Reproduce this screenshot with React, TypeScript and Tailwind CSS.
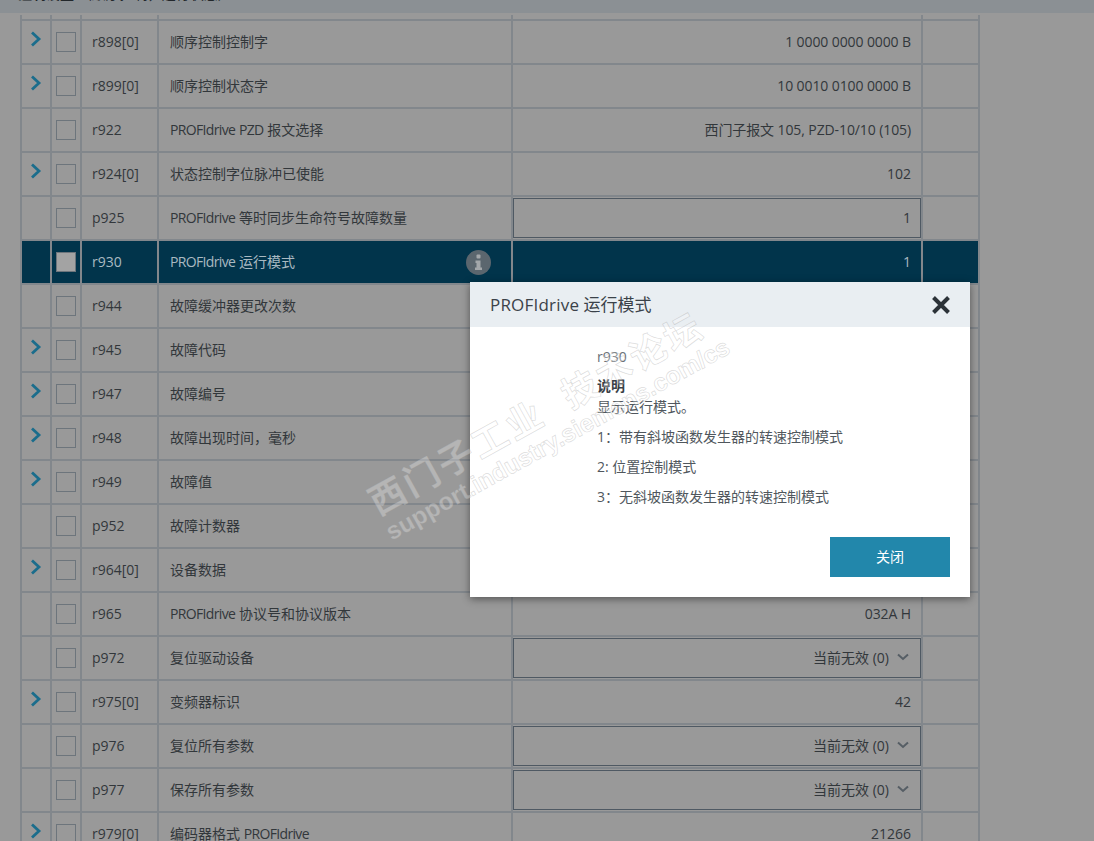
const ROWS = [
  { id: 'r898[0]', name: '顺序控制控制字', value: '1 0000 0000 0000 B', expand: true },
  { id: 'r899[0]', name: '顺序控制状态字', value: '10 0010 0100 0000 B', expand: true },
  { id: 'r922', name: 'PROFIdrive PZD 报文选择', value: '西门子报文 105, PZD-10/10 (105)' },
  { id: 'r924[0]', name: '状态控制字位脉冲已使能', value: '102', expand: true },
  { id: 'p925', name: 'PROFIdrive 等时同步生命符号故障数量', value: '1', kind: 'input' },
  { id: 'r930', name: 'PROFIdrive 运行模式', value: '1', selected: true },
  { id: 'r944', name: '故障缓冲器更改次数', value: '' },
  { id: 'r945', name: '故障代码', value: '', expand: true },
  { id: 'r947', name: '故障编号', value: '', expand: true },
  { id: 'r948', name: '故障出现时间，毫秒', value: '', expand: true },
  { id: 'r949', name: '故障值', value: '', expand: true },
  { id: 'p952', name: '故障计数器', value: '' },
  { id: 'r964[0]', name: '设备数据', value: '', expand: true },
  { id: 'r965', name: 'PROFIdrive 协议号和协议版本', value: '032A H' },
  { id: 'p972', name: '复位驱动设备', value: '当前无效 (0)', kind: 'select' },
  { id: 'r975[0]', name: '变频器标识', value: '42', expand: true },
  { id: 'p976', name: '复位所有参数', value: '当前无效 (0)', kind: 'select' },
  { id: 'p977', name: '保存所有参数', value: '当前无效 (0)', kind: 'select' },
  { id: 'r979[0]', name: '编码器格式 PROFIdrive', value: '21266', expand: true },
];

function Chevron() {
  return (
    <svg width="12" height="16" viewBox="0 0 12 16" className="mt-[10px] ml-[8px]">
      <path d="M2 1.5 L9 8 L2 14.5" fill="none" stroke="#1b6d8c" strokeWidth="2.8" />
    </svg>
  );
}

function InfoIcon() {
  return (
    <svg width="25" height="25" viewBox="0 0 25 25">
      <circle cx="12.5" cy="12.5" r="12.5" fill="#5b666e" />
      <rect x="10.5" y="4.5" width="4" height="4" rx="1" fill="#a3a7aa" />
      <path d="M9.5 10.5h5v7h1.5v2.5h-7v-2.5h1.5v-4.5h-1z" fill="#a3a7aa" />
    </svg>
  );
}

// the latin words run a bit narrower than Open Sans in the reference
function Name({ text }: { text: string }) {
  return (
    <span>
      {text.split(/(PROFIdrive|PZD)/).map((part, i) =>
        i % 2 === 1 ? (
          <span key={i} className="tracking-[-0.65px]">
            {part}
          </span>
        ) : (
          part
        ),
      )}
    </span>
  );
}

function Row({ row }: { row: (typeof ROWS)[number] }) {
  const bg = row.selected ? 'bg-[#01344b]' : 'bg-[#999999]';
  const text = row.selected ? 'text-[#a9b9c1]' : 'text-[#32373b]';
  return (
    <>
      <div className={bg}>{row.expand && <Chevron />}</div>
      <div className={`${bg} flex items-center justify-center`}>
        <div className={`w-5 h-5 border border-[#6d757c] ${row.selected ? 'bg-[#a3a3a3]' : ''}`} />
      </div>
      <div className={`${bg} ${text} flex items-center pl-[10px] pb-[2px]`}>{row.id}</div>
      <div className={`${bg} ${text} flex items-center justify-between pl-[11px] pr-[20px]`}>
        <span className="pb-[2px]">
          <Name text={row.name} />
        </span>
        {row.selected && <InfoIcon />}
      </div>
      <div className={`${bg} ${text} flex items-center`}>
        {row.kind === 'input' || row.kind === 'select' ? (
          <div className="w-full h-10 border border-[#4f5963] flex items-center justify-end pr-[9px]">
            <span className={row.kind === 'select' ? 'mr-[8px] pb-[2px]' : 'pb-[2px]'}>{row.value}</span>
            {row.kind === 'select' && (
              <svg width="12" height="8" viewBox="0 0 12 8" className="mb-[2px] mr-[2px]">
                <path d="M1 1.5 L6 6 L11 1.5" fill="none" stroke="#565e65" strokeWidth="2" />
              </svg>
            )}
          </div>
        ) : (
          <span className={`w-full text-right pr-[10px] pb-[2px] ${row.value.length > 5 ? 'tracking-[-0.1px]' : ''}`}>{row.value}</span>
        )}
      </div>
      <div className={bg} />
    </>
  );
}

export default function App() {
  return (
    <div className="relative w-[1094px] h-[841px] overflow-hidden bg-[#999999] font-['Open_Sans','Noto_Sans_CJK_SC',sans-serif] text-[14px]">
      <div className="h-[13px] bg-[#8b9094] overflow-hidden pl-[18px] text-[#22272b]">
        <div className="-mt-[16px] leading-[20px] whitespace-nowrap">
          <span className="font-bold">控制设置</span> （顺序控制，运行状态）
        </div>
      </div>
      <div className="mt-[2px] ml-[20px] w-[960px] grid grid-cols-[28px_28px_75px_352px_408px_55px] gap-[2px] px-[2px] bg-[#82878c] [grid-auto-rows:42px] [grid-template-rows:4px]">
        <div className="bg-[#999999]" />
        <div className="bg-[#999999]" />
        <div className="bg-[#999999]" />
        <div className="bg-[#999999]" />
        <div className="bg-[#999999]" />
        <div className="bg-[#999999]" />
        {ROWS.map((row) => (
          <Row key={row.id} row={row} />
        ))}
      </div>

      <div className="absolute left-[470px] top-[282px] w-[500px] h-[315px] bg-white shadow-[0_2px_8px_rgba(0,0,0,0.45)] flex flex-col">
        <div className="h-[45px] bg-[#e9eef2] flex items-center justify-between pl-[20px] pr-[19px]">
          <span className="text-[17px] text-[#3b4249]">
            <span className="tracking-[0.2px]">PROFIdrive</span> 运行模式
          </span>
          <svg width="20" height="20" viewBox="0 0 20 20">
            <path d="M2.5 2.5 L17.5 17.5 M17.5 2.5 L2.5 17.5" stroke="#2c3238" strokeWidth="4" />
          </svg>
        </div>
        <div className="pl-[127px] pt-[20px] text-[#50575d] leading-[20px]">
          <p className="text-[#6a7177]">r930</p>
          <p className="mt-[9px] font-bold text-[#3a4046]">说明</p>
          <p className="mt-[1px]">显示运行模式。</p>
          <p className="mt-[10px]">1：带有斜坡函数发生器的转速控制模式</p>
          <p className="mt-[10px]">2: 位置控制模式</p>
          <p className="mt-[10px]">3：无斜坡函数发生器的转速控制模式</p>
        </div>
        <button className="absolute right-[20px] bottom-[20px] w-[120px] h-10 pb-[2px] bg-[#2287ab] text-white text-[14px]">关闭</button>
      </div>

      <div className="absolute left-[360px] top-[484px] origin-top-left -rotate-[29deg] whitespace-nowrap pointer-events-none text-white/30 [-webkit-text-stroke:0.7px_rgba(153,153,153,0.35)]">
        <div className="text-[36px] leading-[42px] tracking-[3px] [word-spacing:14px] font-bold font-['Noto_Sans_CJK_SC',sans-serif]">西门子工业 技术论坛</div>
        <div className="text-[24.5px] leading-[30px] font-bold font-['Liberation_Sans',sans-serif]">support.industry.siemens.com/cs</div>
      </div>
    </div>
  );
}
